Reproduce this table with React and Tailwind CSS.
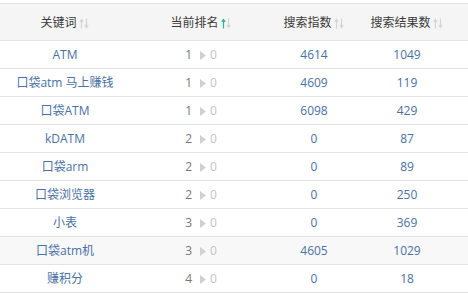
import React from 'react';

const rows = [
  { kw: 'ATM', rank: 1, idx: 4614, res: 1049 },
  { kw: '口袋atm 马上赚钱', rank: 1, idx: 4609, res: 119 },
  { kw: '口袋ATM', rank: 1, idx: 6098, res: 429 },
  { kw: 'kDATM', rank: 2, idx: 0, res: 87 },
  { kw: '口袋arm', rank: 2, idx: 0, res: 89 },
  { kw: '口袋浏览器', rank: 2, idx: 0, res: 250 },
  { kw: '小表', rank: 3, idx: 0, res: 369 },
  { kw: '口袋atm机', rank: 3, idx: 4605, res: 1029, hover: true },
  { kw: '赚积分', rank: 4, idx: 0, res: 18 },
];

// little up/down sort arrows next to header text
function SortArrows({ active }) {
  const up = active ? '#2bb39b' : '#d4d4d4';
  return (
    <svg width="11" height="11" viewBox="0 0 11 11" className="ml-[2px] mt-[2px]">
      <g fill="none" strokeWidth="1.2">
        <path d="M2.5 10.5V2" stroke={up} />
        <path d="M0.8 3.8L2.5 1.6L4.2 3.8" stroke={up} />
        <path d="M7.5 0.5V9" stroke="#d4d4d4" />
        <path d="M5.8 7.2L7.5 9.4L9.2 7.2" stroke="#d4d4d4" />
      </g>
    </svg>
  );
}

const cols = 'grid grid-cols-[130px_142px_84px_102px_1fr] items-center';

export default function App() {
  return (
    <div
      className="w-[468px] h-[294px] bg-white pt-[3px] overflow-hidden text-[12px]"
      style={{ fontFamily: '"Open Sans", "Noto Sans CJK SC", sans-serif' }}
    >
      <div className={`${cols} h-[38px] pt-[1px] bg-[#f5f5f5] border-y border-[#e3e3e3] text-[#3a3a3a]`}>
        <div className="flex items-center justify-center">关键词<SortArrows /></div>
        <div className="flex items-center justify-center">当前排名<SortArrows active /></div>
        <div className="flex items-center justify-center">搜索指数<SortArrows /></div>
        <div className="flex items-center justify-center">搜索结果数<SortArrows /></div>
        <div />
      </div>
      {rows.map((r) => (
        <div
          key={r.kw}
          className={`${cols} h-[28px] pt-[1px] border-b border-[#e3e3e3] ${r.hover ? 'bg-[#f8f8f8]' : ''}`}
        >
          <div className="text-center text-[#4a71a5]">{r.kw}</div>
          <div className="flex items-center justify-center">
            <span className="text-[#777]">{r.rank}</span>
            <svg width="6" height="9" viewBox="0 0 6 9" className="ml-[8px] mr-[4px]">
              <path d="M0 0L6 4.5L0 9Z" fill="#d0d0d0" />
            </svg>
            <span className="text-[#c4c4c4]">0</span>
          </div>
          <div className="text-center text-[#4a71a5]">{r.idx}</div>
          <div className="text-center text-[#4a71a5]">{r.res}</div>
          <div />
        </div>
      ))}
    </div>
  );
}
